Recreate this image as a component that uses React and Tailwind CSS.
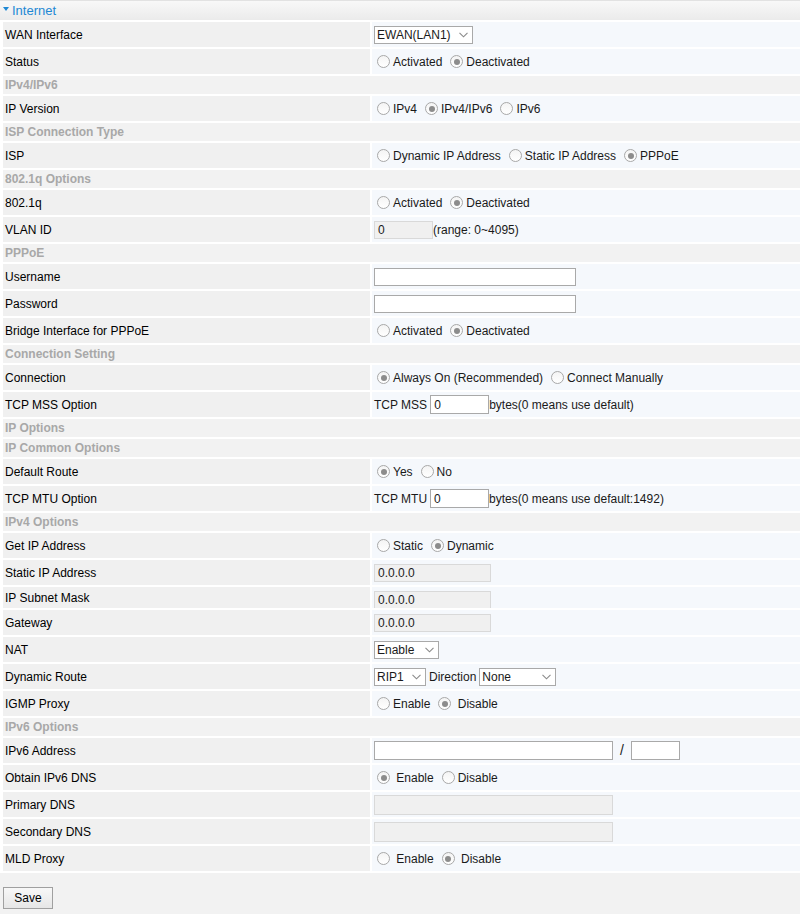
import React from 'react';

const Radio = ({ checked }) => (
  <span className="ml-[5px] mr-[3px] w-[13px] h-[13px] rounded-full border border-[#a8a8a8] bg-gradient-to-b from-[#f4f4f4] to-white flex items-center justify-center shrink-0">
    {checked && <span className="w-[6px] h-[6px] rounded-full bg-[#8c8c8c]"></span>}
  </span>
);

const Opt = ({ checked, children }) => (
  <span className="flex items-center mr-[3px]">
    <Radio checked={checked} />
    <span>{children}</span>
  </span>
);

const Chevron = () => (
  <svg width="9" height="6" viewBox="0 0 9 6" className="shrink-0">
    <path d="M0.5 0.8 L4.5 4.8 L8.5 0.8" fill="none" stroke="#8a8a8a" strokeWidth="1.1" />
  </svg>
);

const Select = ({ w, value }) => (
  <span className={`${w} h-[18px] border border-[#a9a9a9] bg-white flex items-center justify-between pl-[2px] pr-[4px] leading-none`}>
    <span>{value}</span>
    <Chevron />
  </span>
);

const TextBox = ({ w, value = '', disabled, h = 'h-[18px]' }) => (
  <span className={`${w} ${h} border flex items-center pl-[3px] leading-none shrink-0 ${disabled ? 'bg-[#f0f0f0] border-[#d9d9d9]' : 'bg-white border-[#a9a9a9]'}`}>
    {value}
  </span>
);

const rows = [
  { label: 'WAN Interface', value: <Select w="w-[99px] ml-[2px]" value="EWAN(LAN1)" /> },
  { label: 'Status', value: <><Opt>Activated</Opt><Opt checked>Deactivated</Opt></> },
  { hdr: 'IPv4/IPv6' },
  { label: 'IP Version', value: <><Opt>IPv4</Opt><Opt checked>IPv4/IPv6</Opt><Opt>IPv6</Opt></> },
  { hdr: 'ISP Connection Type' },
  { label: 'ISP', value: <><Opt>Dynamic IP Address</Opt><Opt>Static IP Address</Opt><Opt checked>PPPoE</Opt></> },
  { hdr: '802.1q Options' },
  { label: '802.1q', value: <><Opt>Activated</Opt><Opt checked>Deactivated</Opt></> },
  { label: 'VLAN ID', value: <><span className="ml-[2px]"></span><TextBox w="w-[59px]" value="0" disabled /><span>(range: 0~4095)</span></> },
  { hdr: 'PPPoE' },
  { label: 'Username', value: <><span className="ml-[2px]"></span><TextBox w="w-[202px]" /></> },
  { label: 'Password', value: <><span className="ml-[2px]"></span><TextBox w="w-[202px]" /></> },
  { label: 'Bridge Interface for PPPoE', value: <><Opt>Activated</Opt><Opt checked>Deactivated</Opt></> },
  { hdr: 'Connection Setting' },
  { label: 'Connection', value: <><Opt checked>Always On (Recommended)</Opt><Opt>Connect Manually</Opt></> },
  { label: 'TCP MSS Option', value: <><span className="ml-[2px] mr-[3px]">TCP MSS</span><TextBox w="w-[59px]" h="h-[19px]" value="0" /><span>bytes(0 means use default)</span></> },
  { hdr: 'IP Options' },
  { hdr: 'IP Common Options' },
  { label: 'Default Route', value: <><Opt checked>Yes</Opt><Opt>No</Opt></> },
  { label: 'TCP MTU Option', value: <><span className="ml-[2px] mr-[3px]">TCP MTU</span><TextBox w="w-[59px]" h="h-[19px]" value="0" /><span>bytes(0 means use default:1492)</span></> },
  { hdr: 'IPv4 Options' },
  { label: 'Get IP Address', value: <><Opt>Static</Opt><Opt checked>Dynamic</Opt></> },
  { label: 'Static IP Address', value: <><span className="ml-[2px]"></span><TextBox w="w-[117px]" value="0.0.0.0" disabled /></> },
  { label: 'IP Subnet Mask', short: true, value: <><span className="ml-[2px]"></span><TextBox w="w-[117px]" value="0.0.0.0" disabled /></> },
  { label: 'Gateway', value: <><span className="ml-[2px]"></span><TextBox w="w-[117px]" value="0.0.0.0" disabled /></> },
  { label: 'NAT', value: <Select w="w-[65px] ml-[2px]" value="Enable" /> },
  { label: 'Dynamic Route', value: <><Select w="w-[52px] ml-[2px]" value="RIP1" /><span className="mx-[3px]">Direction</span><Select w="w-[77px]" value="None" /></> },
  { label: 'IGMP Proxy', value: <><Opt>Enable</Opt><Opt checked>&nbsp;Disable</Opt></> },
  { hdr: 'IPv6 Options' },
  { label: 'IPv6 Address', value: <><span className="ml-[2px]"></span><TextBox w="w-[239px]" h="h-[19px]" /><span className="mx-[7px] text-[14px]">/</span><TextBox w="w-[49px]" h="h-[19px]" /></> },
  { label: 'Obtain IPv6 DNS', value: <><Opt checked>&nbsp;Enable</Opt><Opt>Disable</Opt></> },
  { label: 'Primary DNS', value: <><span className="ml-[2px]"></span><TextBox w="w-[239px]" h="h-[20px]" disabled /></> },
  { label: 'Secondary DNS', value: <><span className="ml-[2px]"></span><TextBox w="w-[239px]" h="h-[20px]" disabled /></> },
  { label: 'MLD Proxy', value: <><Opt>&nbsp;Enable</Opt><Opt checked>&nbsp;Disable</Opt></> },
];

export default function App() {
  return (
    <div className="w-[800px] min-h-[914px] bg-[#f2f2f2] text-[12px] text-black" style={{ fontFamily: "'Liberation Sans', Arial, sans-serif" }}>
      <div className="h-[20px] bg-gradient-to-b from-[#f8f8f8] to-[#ebebeb] border-t border-[#e2e2e2] flex items-center pl-[3px] text-[13px] text-[#1e88d4]">
        <svg width="6" height="4" viewBox="0 0 6 4" className="mr-[3px] -mt-[3px]">
          <path d="M0 0 L6 0 L3 4 Z" fill="#1e88d4" />
        </svg>
        Internet
      </div>

      <div className="bg-white flex flex-col gap-[2px] py-[2px] pl-[3px]">
        {rows.map((r, i) =>
          r.hdr ? (
            <div key={i} className="h-[18px] bg-[#f2f2f2] flex items-center pl-[2px] font-bold text-[#a8a8a8]">
              {r.hdr}
            </div>
          ) : (
            <div key={i} className={`flex gap-[2px] ${r.short ? 'h-[21px]' : 'h-[25px]'}`}>
              <div className="w-[367px] shrink-0 bg-[#f0f0f0] flex items-center pl-[2px]">{r.label}</div>
              <div className={`flex-1 bg-[#f5f8fc] flex text-[#1a1a1a] ${r.short ? 'items-start pt-[4px] overflow-hidden' : 'items-center'}`}>
                {r.value}
              </div>
            </div>
          )
        )}
      </div>

      <div className="pt-[14px] pl-[3px]">
        <button className="w-[50px] h-[22px] border border-[#a0a0a0] bg-gradient-to-b from-[#f8f8f8] to-[#e6e6e6] text-[12px] text-black">
          Save
        </button>
      </div>
    </div>
  );
}
